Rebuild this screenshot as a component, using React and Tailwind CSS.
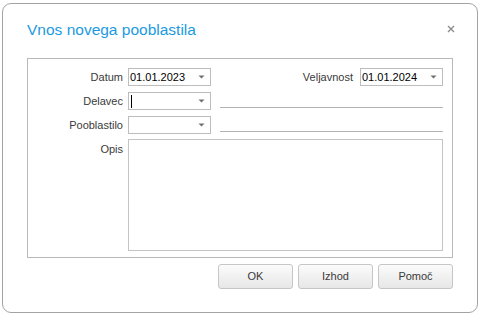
import { useState } from 'react';

const font = { fontFamily: '"Liberation Sans", Arial, sans-serif' };

function Arrow() {
  return (
    <svg width="7" height="4" viewBox="0 0 7 4" className="shrink-0">
      <path d="M0.5 0.5 H6.5 L3.5 3.5 Z" fill="#6f6f6f" />
    </svg>
  );
}

function Combo({ value, cursor }) {
  return (
    <div className="w-[83px] h-[18px] border border-[#bdbdbd] bg-white flex items-center pl-[1px] pr-[5px] shrink-0">
      <div className="flex-1 flex items-center text-[11px] leading-[16px] text-black">
        {cursor ? <span className="w-px h-[13px] bg-black ml-[1px]" /> : value}
      </div>
      <Arrow />
    </div>
  );
}

export default function App() {
  const [opis, setOpis] = useState('');

  return (
    <div className="w-[481px] h-[316px] bg-white pt-[3px] pl-[2px]" style={font}>
      <div className="w-[476px] h-[310px] border border-[#a3a3a3] rounded-[9px] bg-white px-[24px] flex flex-col">
        {/* title */}
        <div className="flex items-center justify-between pt-[16px] h-[54px] pb-[18px]">
          <span className="text-[15.5px] leading-[20px] text-[#1b9ae0]">Vnos novega pooblastila</span>
          <svg width="8" height="8" viewBox="0 0 8 8" className="mr-[-2px] mt-[-2px]">
            <path d="M1 1 L7 7 M7 1 L1 7" stroke="#8c8c8c" strokeWidth="1.4" />
          </svg>
        </div>

        {/* panel */}
        <div className="border border-[#b8b8b8] pt-[9px] pr-[9px] pb-[6px] flex flex-col gap-[6px] text-[11px] text-[#3a3a3a]">
          <div className="flex items-center h-[18px]">
            <span className="w-[95px] mr-[5px] text-right">Datum</span>
            <Combo value="01.01.2023" />
            <span className="flex-1 text-right mr-[7px]">Veljavnost</span>
            <Combo value="01.01.2024" />
          </div>
          <div className="flex items-center h-[18px]">
            <span className="w-[95px] mr-[5px] text-right">Delavec</span>
            <Combo cursor />
            <div className="flex-1 h-px bg-[#b4b4b4] ml-[9px] self-end mb-[2px]" />
          </div>
          <div className="flex items-center h-[18px]">
            <span className="w-[95px] mr-[5px] text-right">Pooblastilo</span>
            <Combo value="" />
            <div className="flex-1 h-px bg-[#b4b4b4] ml-[9px] self-end mb-[2px]" />
          </div>
          <div className="flex items-start -mt-px">
            <span className="w-[95px] mr-[5px] text-right leading-[18px] mt-[1px]">Opis</span>
            <textarea
              value={opis}
              onChange={(e) => setOpis(e.target.value)}
              className="flex-1 h-[112px] border border-[#c4c4c4] resize-none outline-none text-[11px] p-[2px]"
            />
          </div>
        </div>

        {/* buttons */}
        <div className="flex justify-end gap-[5px] mt-[6px]">
          {['OK', 'Izhod', 'Pomoč'].map((b) => (
            <button
              key={b}
              className="w-[75px] h-[25px] border border-[#c6c6c6] rounded-[3px] bg-gradient-to-b from-[#fbfbfb] to-[#e7e7e7] text-[11px] font-normal text-[#3a3a3a]"
            >
              {b}
            </button>
          ))}
        </div>
      </div>
    </div>
  );
}
